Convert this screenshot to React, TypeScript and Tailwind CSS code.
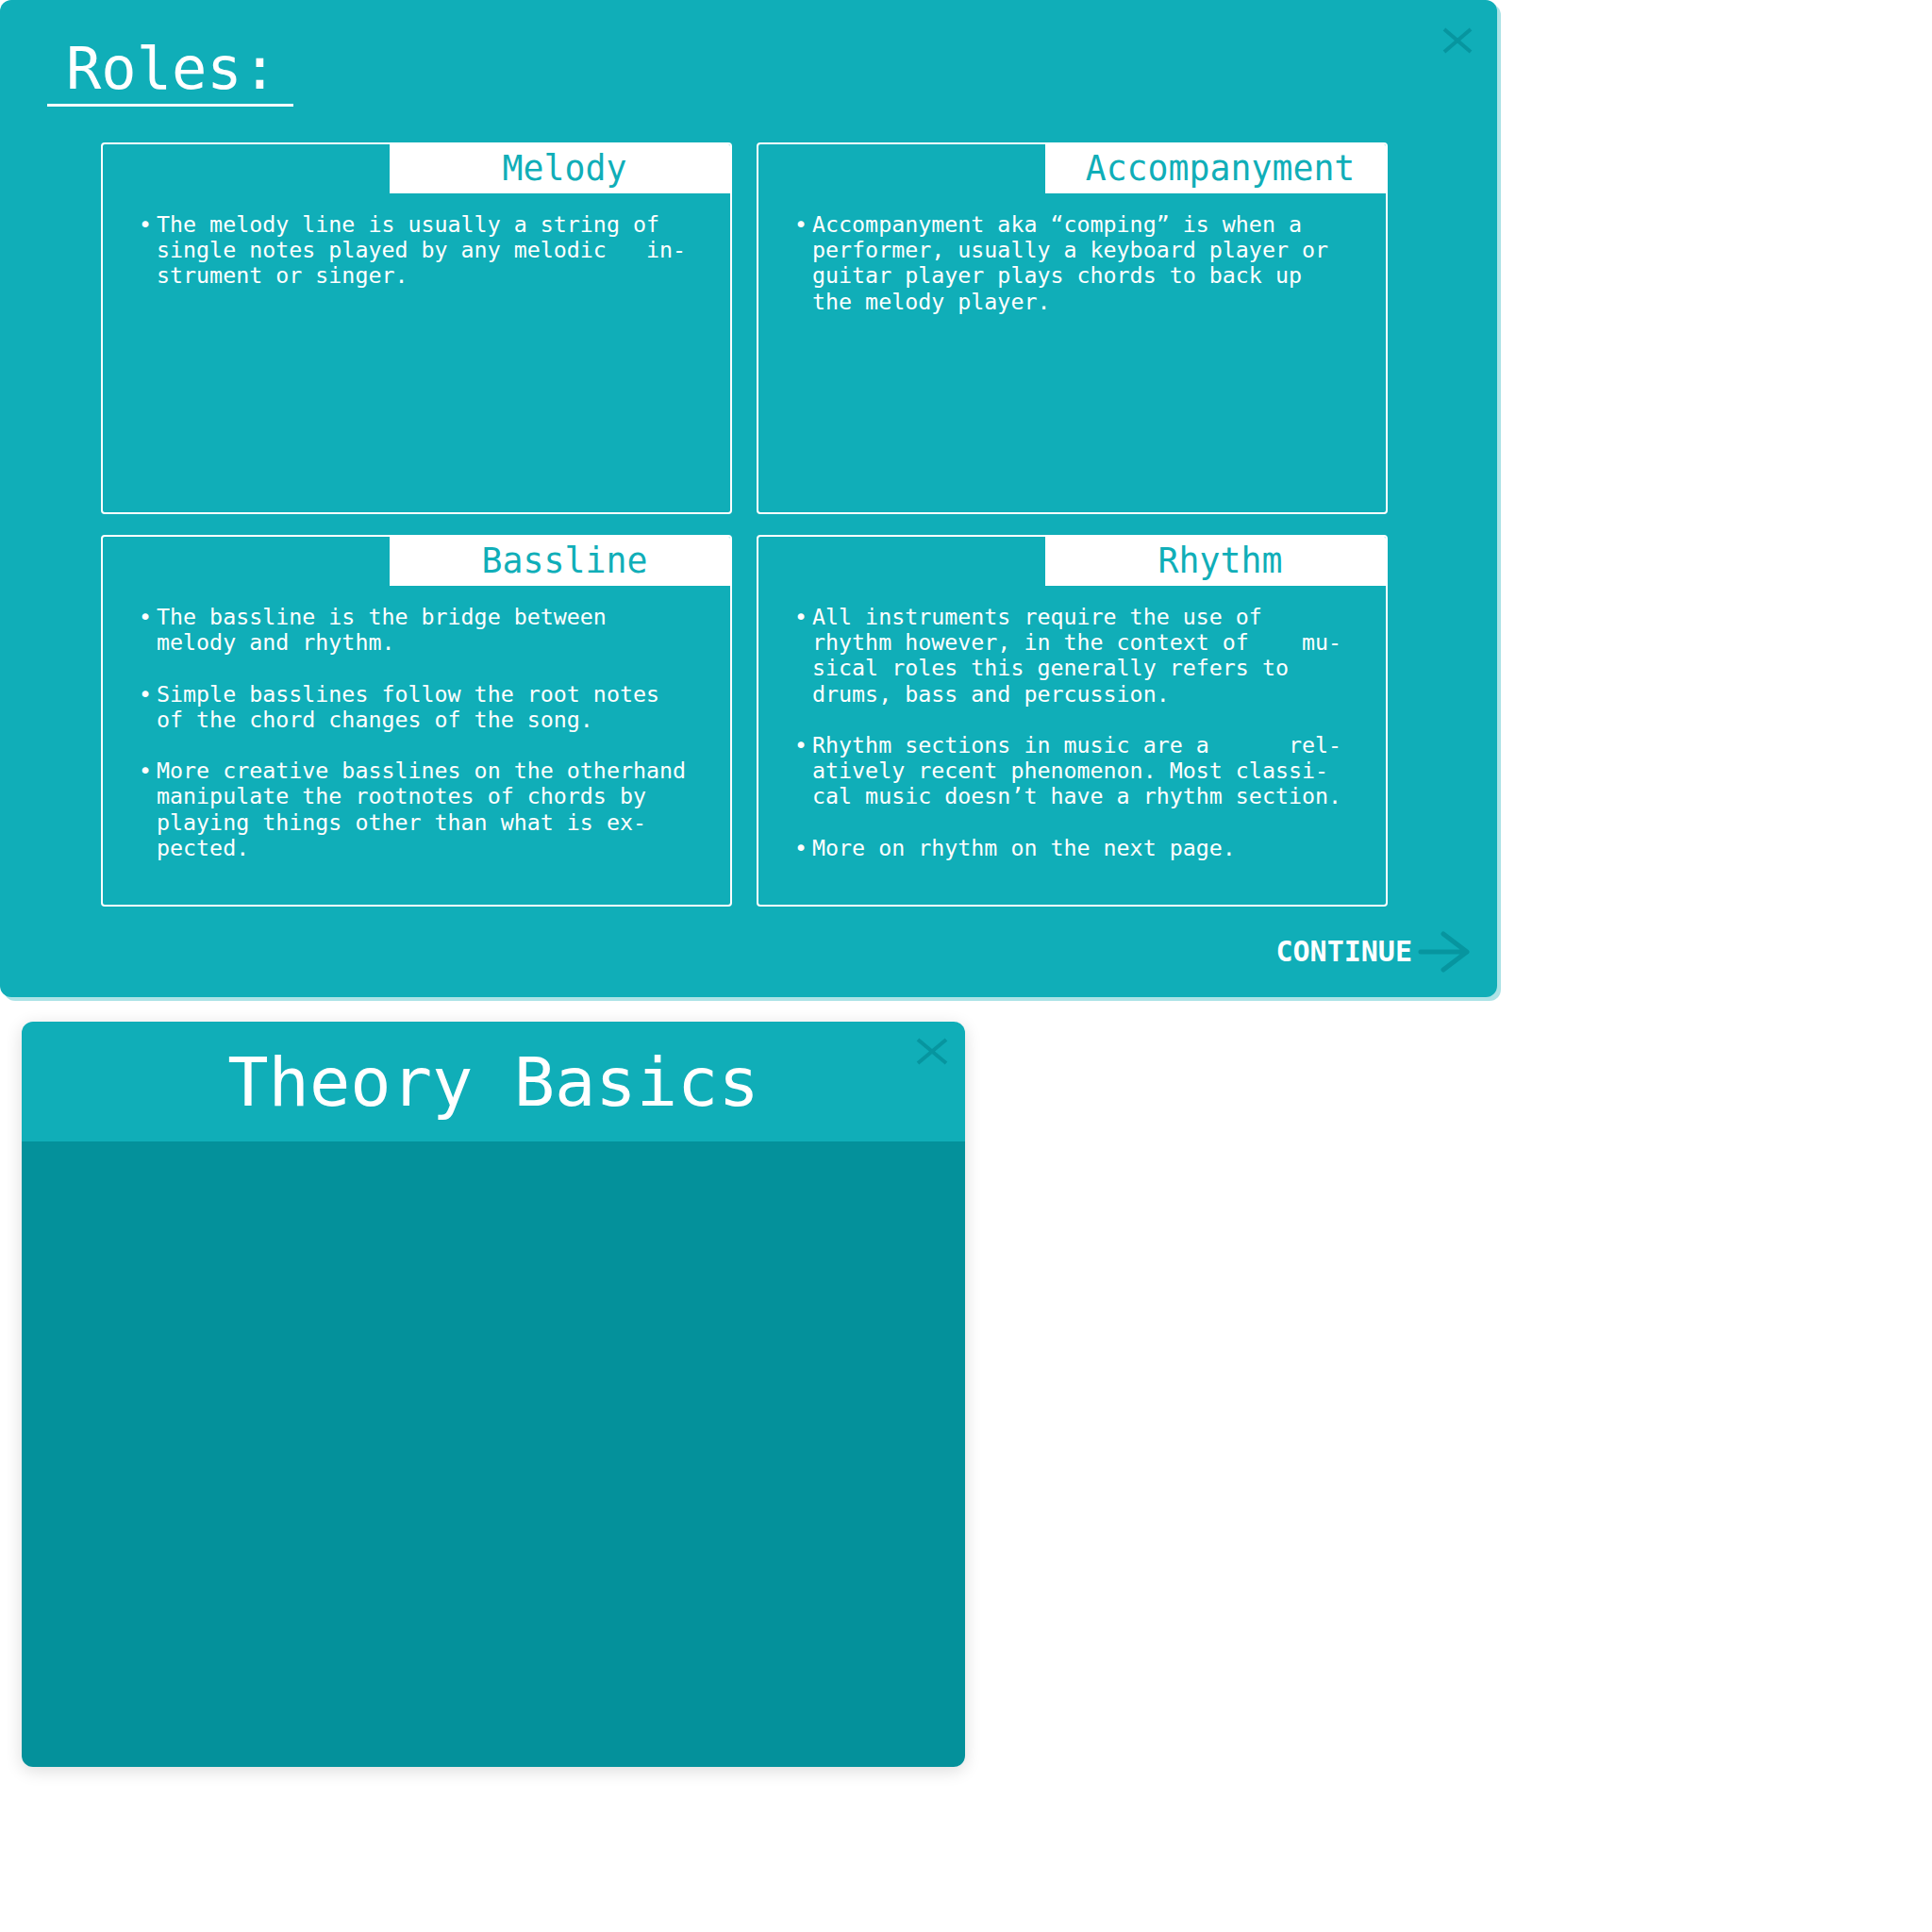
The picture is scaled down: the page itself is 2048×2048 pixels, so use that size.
import React from "react";

type Role = {
  title: string;
  bullets: string[][];
};

const roles: Role[] = [
  {
    title: "Melody",
    bullets: [
      [
        "The melody line is usually a string of",
        "single notes played by any melodic   in-",
        "strument or singer.",
      ],
    ],
  },
  {
    title: "Accompanyment",
    bullets: [
      [
        "Accompanyment aka \u201ccomping\u201d is when a",
        "performer, usually a keyboard player or",
        "guitar player plays chords to back up",
        "the melody player.",
      ],
    ],
  },
  {
    title: "Bassline",
    bullets: [
      ["The bassline is the bridge between", "melody and rhythm."],
      ["Simple basslines follow the root notes", "of the chord changes of the song."],
      [
        "More creative basslines on the otherhand",
        "manipulate the rootnotes of chords by",
        "playing things other than what is ex-",
        "pected.",
      ],
    ],
  },
  {
    title: "Rhythm",
    bullets: [
      [
        "All instruments require the use of",
        "rhythm however, in the context of    mu-",
        "sical roles this generally refers to",
        "drums, bass and percussion.",
      ],
      [
        "Rhythm sections in music are a      rel-",
        "atively recent phenomenon. Most classi-",
        "cal music doesn\u2019t have a rhythm section.",
      ],
      ["More on rhythm on the next page."],
    ],
  },
];

const CloseIcon = ({ w, h }: { w: number; h: number }) => (
  <svg width={w} height={h} viewBox={`0 0 ${w} ${h}`} fill="none">
    <line x1="2" y1="2" x2={w - 2} y2={h - 2} stroke="#07959f" strokeWidth="4" />
    <line x1={w - 2} y1="2" x2="2" y2={h - 2} stroke="#07959f" strokeWidth="4" />
  </svg>
);

const RoleCard = ({ role }: { role: Role }) => (
  <div className="h-[394px] border-2 border-white rounded-[4px] overflow-hidden">
    <div className="flex justify-end">
      <div className="w-[361px] h-[52px] bg-white flex items-center justify-center pl-[10px] text-[36.5px] leading-none text-[#10aeb8]">
        {role.title}
      </div>
    </div>
    <div className="pt-[19px] pl-[38px] flex flex-col gap-[27.2px] text-[23.3px] leading-[27.2px] text-white">
      {role.bullets.map((lines, i) => (
        <div key={i} className="flex gap-[5px]">
          <span className="w-[14px] text-center shrink-0">•</span>
          <div className="whitespace-pre">
            {lines.map((l, j) => (
              <div key={j}>{l}</div>
            ))}
          </div>
        </div>
      ))}
    </div>
  </div>
);

export default function App() {
  return (
    <div className="font-['DejaVu_Sans_Mono',monospace] bg-white min-h-[2048px]">
      {/* roles panel */}
      <div className="w-[1587px] h-[1057px] bg-[#10aeb8] rounded-xl shadow-[4px_4px_0_rgba(16,174,184,0.35)] flex flex-col pt-[29px]">
        <div className="flex justify-between items-start">
          <div className="ml-[50px] mt-[7px] w-[261px] border-b-[3px] border-white pl-[20px] text-[62px] leading-[74px] text-white">
            Roles:
          </div>
          <button className="mr-[26px]">
            <CloseIcon w={32} h={28} />
          </button>
        </div>

        <div className="ml-[107px] mt-[38px] grid grid-cols-[669px_669px] gap-x-[26px] gap-y-[22px]">
          {roles.map((r) => (
            <RoleCard key={r.title} role={r} />
          ))}
        </div>

        <div className="flex justify-end items-center gap-[6px] pr-[28px] mt-[24px]">
          <span className="text-[30px] font-bold text-white leading-none">CONTINUE</span>
          <svg width="56" height="48" viewBox="0 0 56 48" fill="none">
            <path
              d="M3 24 H52 M27 5 L52 24 L27 43"
              stroke="#07959f"
              strokeWidth="5"
              strokeLinecap="round"
              strokeLinejoin="round"
            />
          </svg>
        </div>
      </div>

      {/* theory basics panel */}
      <div className="ml-[23px] mt-[26px] w-[1000px] h-[790px] rounded-xl overflow-hidden shadow-[0_4px_18px_rgba(0,0,0,0.14)] flex flex-col">
        <div className="relative h-[127px] bg-[#10aeb8] flex items-center justify-center">
          <h1 className="text-[72px] leading-none text-white">Theory Basics</h1>
          <button className="absolute top-[17px] right-[18px]">
            <CloseIcon w={34} h={29} />
          </button>
        </div>
        <div className="flex-1 bg-[#04919b]" />
      </div>
    </div>
  );
}
